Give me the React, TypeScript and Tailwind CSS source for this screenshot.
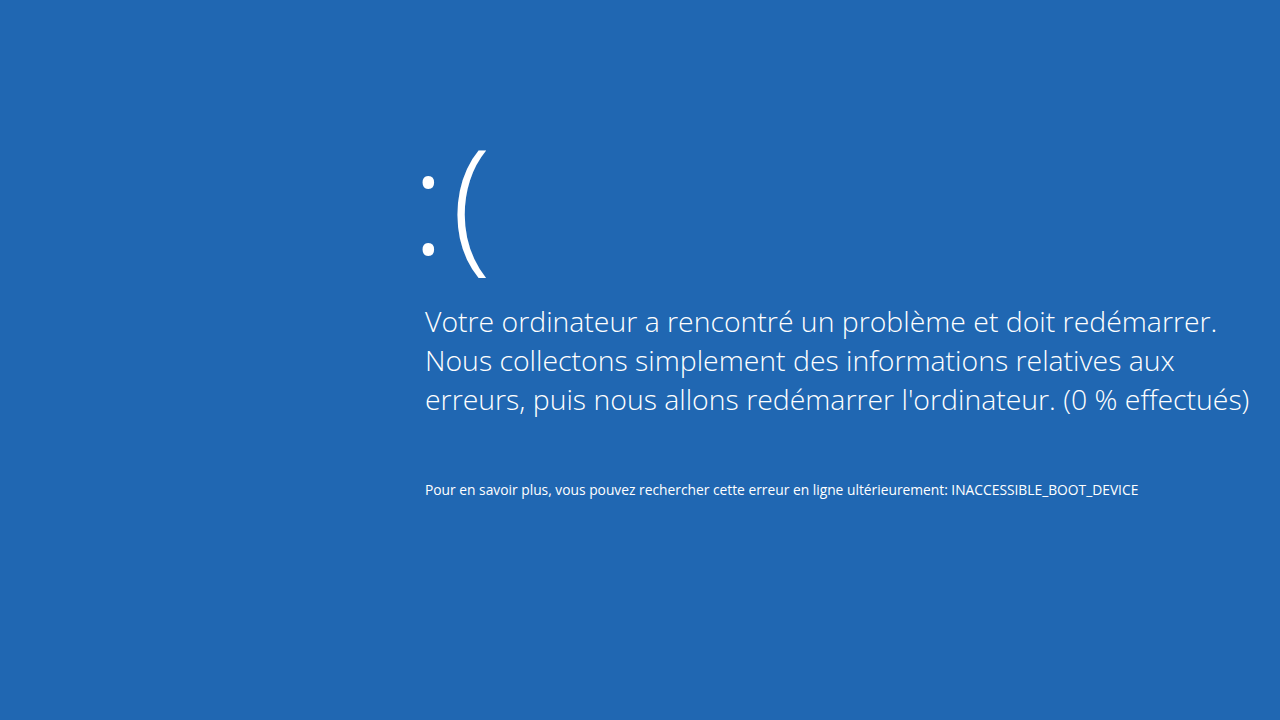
export default function App() {
  return (
    <div
      className="w-[1280px] h-[720px] bg-[#2067b2] text-white overflow-hidden"
      style={{ fontFamily: '"Open Sans", "Noto Sans", sans-serif' }}
    >
      <div className="flex flex-col pl-[425px] pt-[114px]">
        <div className="-ml-[14px] text-[145px] leading-[170px] font-light tracking-[6px] h-[170px]">:(</div>
        <div className="mt-[18px] text-[28.4px] leading-[39px] font-light">
          <p>Votre ordinateur a rencontré un problème et doit redémarrer.</p>
          <p>Nous collectons simplement des informations relatives aux</p>
          <p>erreurs, puis nous allons redémarrer l'ordinateur. (0 % effectués)</p>
        </div>
        <p className="mt-[61px] text-[13.8px] leading-[20px]">
          Pour en savoir plus, vous pouvez rechercher cette erreur en ligne ultérieurement: INACCESSIBLE_BOOT_DEVICE
        </p>
      </div>
    </div>
  );
}
